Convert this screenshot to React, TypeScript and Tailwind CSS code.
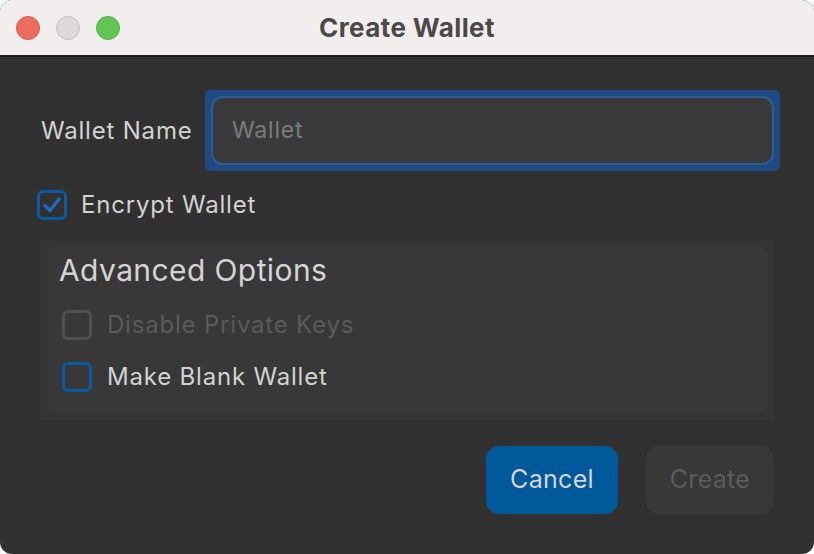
import React from "react";

const font = { fontFamily: "Inter, 'Liberation Sans', sans-serif" };

function CheckBox({ checked, tone }: { checked?: boolean; tone: "blue" | "gray" }) {
  return (
    <div
      className={
        tone === "blue"
          ? "w-[30px] h-[30px] shrink-0 rounded-[6px] border-[3px] border-[#0b5aa3] flex items-center justify-center"
          : "w-[30px] h-[30px] shrink-0 rounded-[6px] border-[3px] border-[#505050] flex items-center justify-center"
      }
    >
      {checked && (
        <svg width="22" height="22" viewBox="0 0 22 22">
          <path
            d="M4 11.5 L9 16.5 L18 5"
            fill="none"
            stroke="#1a6dc0"
            strokeWidth="3.4"
            strokeLinecap="round"
            strokeLinejoin="round"
          />
        </svg>
      )}
    </div>
  );
}

export default function App() {
  return (
    <div className="w-[814px] h-[554px] bg-white" style={font}>
      <div className="w-full h-full rounded-[12px] overflow-hidden flex flex-col bg-[#313131]">
        {/* title bar */}
        <div className="h-[57px] bg-[#f1eeed] border-b-2 border-[#1c1c1c] flex items-center relative shrink-0">
          <div className="flex gap-[16px] pl-[16px]">
            <div className="w-[24px] h-[24px] rounded-full bg-[#ee6b60] border border-[#d85a50]" />
            <div className="w-[24px] h-[24px] rounded-full bg-[#dbd8d7] border border-[#c2bfbe]" />
            <div className="w-[24px] h-[24px] rounded-full bg-[#62c655] border border-[#52b046]" />
          </div>
          <div className="absolute inset-0 flex items-center justify-center text-[26px] font-bold tracking-[0.4px] text-[#4b4a4a]">
            Create Wallet
          </div>
        </div>

        {/* body */}
        <div className="flex-1 flex flex-col pl-[37px] pr-[34px] pt-[33px]">
          <div className="flex items-center">
            <div className="w-[168px] pl-[4px] text-[24px] tracking-[0.8px] text-[#d2d2d2]">Wallet Name</div>
            <div className="flex-1 bg-[#1f4a84] rounded-[5px] p-[6px]">
              <div className="h-[69px] rounded-[12px] border-2 border-[#2d5d95] bg-[#3a3a3c] flex items-center pl-[19px] text-[23px] tracking-[0.8px] text-[#7c7c7c]">
                Wallet
              </div>
            </div>
          </div>

          <div className="flex items-center gap-[14px] mt-[19px]">
            <CheckBox checked tone="blue" />
            <span className="text-[24px] leading-[30px] tracking-[0.8px] text-[#d2d2d2]">Encrypt Wallet</span>
          </div>

          <div className="mt-[20px] ml-[3px] mr-[6px] bg-[#353535] p-[6px] pb-[7px]">
            <div className="bg-[#383838] rounded-[10px] h-[167px] pl-[13px] pt-[4px]">
              <div className="text-[30px] tracking-[0.4px] text-[#d4d4d4] leading-[40px]">Advanced Options</div>
              <div className="flex items-center gap-[15px] mt-[20px] pl-[3px]">
                <CheckBox tone="gray" />
                <span className="text-[24px] leading-[30px] tracking-[0.8px] text-[#5b5b5b]">Disable Private Keys</span>
              </div>
              <div className="flex items-center gap-[15px] mt-[22px] pl-[3px]">
                <CheckBox tone="blue" />
                <span className="text-[24px] leading-[30px] tracking-[0.8px] text-[#d2d2d2]">Make Blank Wallet</span>
              </div>
            </div>
          </div>

          <div className="flex justify-end gap-[28px] mt-[26px] mr-[6px]">
            <button className="w-[132px] h-[68px] rounded-[13px] bg-[#00599b] text-[25px] tracking-[0.3px] text-[#d4d4d4]">
              Cancel
            </button>
            <button className="w-[128px] h-[68px] rounded-[13px] bg-[#383838] text-[25px] tracking-[0.3px] text-[#5c5c5c]">
              Create
            </button>
          </div>
        </div>
      </div>
    </div>
  );
}
